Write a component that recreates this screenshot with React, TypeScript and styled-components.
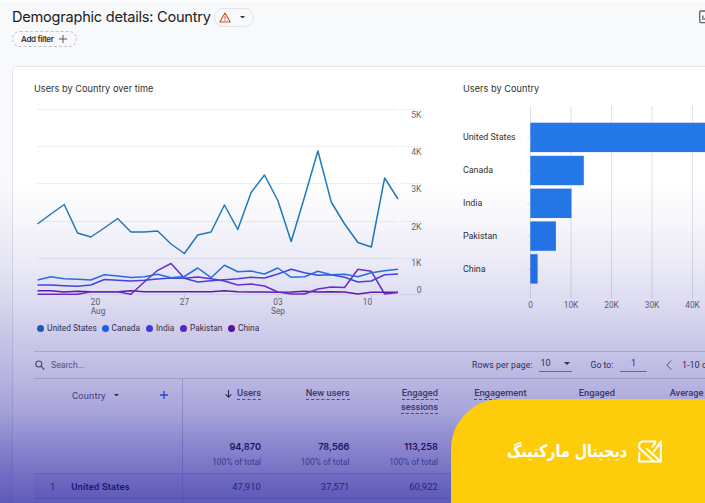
import React from "react";
import styled, { createGlobalStyle } from "styled-components";

const GlobalStyle = createGlobalStyle`
  * { box-sizing: border-box; }
  body { margin: 0; overflow: hidden; background: #f8f9fb; font-family: Roboto, sans-serif; color: #35363a; }
`;

const Page = styled.main`
  position: relative;
  width: 705px;
  height: 503px;
  overflow: hidden;
  background: #f8f9fb;
  border-top: 2px solid #fff;
`;

const Header = styled.header`
  display: flex;
  flex-direction: column;
  height: 64px;
  padding: 5px 0 0 12px;
`;

const TitleRow = styled.div`
  display: flex;
  align-items: center;
  height: 20px;
`;

const Title = styled.h1`
  width: 202px;
  margin: 0;
  font: 400 14.6px/20px Inter, sans-serif;
  letter-spacing: -0.25px;
  white-space: nowrap;
  color: #202124;
`;

const WarningPill = styled.div`
  display: flex;
  align-items: center;
  gap: 9px;
  width: 40px;
  height: 19px;
  padding-left: 4px;
  border: 1px solid #e1e3e7;
  border-radius: 10px;
`;

const HeaderSpacer = styled.div`
  flex: 1;
`;

const FilterButton = styled.button`
  display: flex;
  align-items: center;
  gap: 5px;
  width: 65px;
  height: 16px;
  margin-top: 4px;
  padding: 0 0 0 8px;
  border: 1px dashed #c2c4c8;
  border-radius: 8px;
  background: none;
  font: 600 8px Inter, sans-serif;
  letter-spacing: -0.32px;
  white-space: nowrap;
  color: #303134;
`;

const Card = styled.section`
  width: 710px;
  height: 460px;
  margin-left: 12px;
  padding-left: 21px;
  border: 1px solid #e3e4e8;
  border-radius: 5px;
  background: #fff;
`;

const Charts = styled.div`
  display: grid;
  grid-template-columns: 429px 1fr;
  height: 284px;
  padding-top: 14px;
`;

const ChartPanel = styled.div`
  display: flex;
  flex-direction: column;
`;

const ChartTitle = styled.h2`
  height: 14px;
  margin: 0;
  font: 400 9.2px/15px Inter, sans-serif;
  letter-spacing: 0.02px;
  color: #303134;
`;

const Plot = styled.svg`
  display: block;
  flex: none;
  overflow: visible;
  font-family: Roboto, sans-serif;
`;

const Legend = styled.div`
  display: grid;
  grid-template-columns: 64.5px 44.5px 34px 48px 50px;
  padding-left: 3px;
  margin-top: 2px;
`;

const LegendItem = styled.span<{ $color: string }>`
  display: flex;
  align-items: center;
  gap: 3px;
  font-size: 8.4px;
  line-height: 12px;
  white-space: nowrap;
  &::before {
    content: "";
    width: 7px;
    height: 7px;
    border-radius: 50%;
    background: ${(p) => p.$color};
  }
`;

const Table = styled.div`
  width: 686px;
  border-top: 1px solid #d3d4da;
`;

const Toolbar = styled.div`
  display: flex;
  align-items: center;
  height: 27px;
  border-bottom: 1px solid #d3d4da;
  font-size: 8.7px;
  white-space: nowrap;
`;

const SearchBox = styled.div`
  display: flex;
  flex: none;
  align-items: center;
  gap: 6px;
  width: 438px;
  color: #66676c;
`;

const RowsLabel = styled.span`
  flex: none;
  width: 66.5px;
  letter-spacing: 0.1px;
`;

const Field = styled.div<{ $width: number; $gap: number }>`
  display: flex;
  flex: none;
  justify-content: center;
  align-items: center;
  gap: 13px;
  width: ${(p) => p.$width}px;
  height: 13px;
  margin-right: ${(p) => p.$gap}px;
  padding-bottom: 3px;
  border-bottom: 1px solid #85868c;
  font-size: 9px;
`;

const GoLabel = styled.span`
  flex: none;
  width: 29.5px;
`;

const Range = styled.span`
  margin-left: 10px;
  font-size: 9px;
`;

const Row = styled.div<{ $height: number; $shaded?: boolean }>`
  display: grid;
  grid-template-columns: 149px 78px repeat(5, 88.5px);
  height: ${(p) => p.$height}px;
  border-bottom: 1px solid #d3d4da;
  background: ${(p) => (p.$shaded ? "#f3f3f6" : "transparent")};
`;

const DimensionHead = styled.div`
  display: flex;
  height: 32px;
  align-items: center;
  padding-left: 38px;
  font-size: 9.3px;
  color: #55565b;
  letter-spacing: 0.2px;
  & svg:first-of-type { margin-left: 8px; }
  & svg:last-of-type { margin-left: 41px; }
`;

const DimensionCell = styled.div`
  border-right: 1px solid #d0d1d8;
`;

const MetricCell = styled.div`
  display: flex;
  flex-direction: column;
  align-items: flex-end;
  padding-top: 8px;
`;

const MetricName = styled.div`
  display: flex;
  flex-direction: column;
  align-items: flex-end;
  height: 53px;
  font-size: 9.3px;
  font-weight: 500;
  line-height: 12px;
  white-space: nowrap;
  color: #4a4b50;
`;

const MetricLine = styled.span`
  display: flex;
  align-items: center;
  gap: 5px;
  height: 13.5px;
  & > span { border-bottom: 1px dashed #66676d; line-height: 12px; }
`;

const Total = styled.strong`
  font: 600 9.2px/14px Inter, sans-serif;
  letter-spacing: 0.02px;
  color: #101116;
`;

const Share = styled.small`
  margin-top: 1px;
  font-size: 8.4px;
  line-height: 14px;
  color: #66676c;
`;

const NameCell = styled.div`
  display: flex;
  align-items: center;
  gap: 16px;
  padding-left: 16px;
  border-right: 1px solid #d0d1d8;
  font-size: 9.3px;
  & strong { font-weight: 600; letter-spacing: 0.18px; color: #101116; }
`;

const ValueCell = styled.div`
  display: flex;
  align-items: center;
  justify-content: flex-end;
  font-size: 9.5px;
  letter-spacing: 0.05px;
`;

const Tint = styled.div`
  position: absolute;
  inset: -2px 0 0 0;
  pointer-events: none;
  background: linear-gradient(
    to bottom,
    rgba(32, 24, 160, 0) 180px,
    rgba(32, 24, 160, 0.03) 215px,
    rgba(32, 24, 160, 0.085) 260px,
    rgba(32, 24, 160, 0.15) 300px,
    rgba(32, 24, 160, 0.235) 340px,
    rgba(32, 24, 160, 0.31) 378px,
    rgba(32, 24, 160, 0.39) 410px,
    rgba(32, 24, 160, 0.52) 445px,
    rgba(32, 24, 160, 0.61) 472px,
    rgba(32, 24, 160, 0.71) 503px
  );
`;

const Brand = styled.aside`
  position: absolute;
  right: 0;
  bottom: 0;
  display: flex;
  align-items: center;
  justify-content: flex-end;
  gap: 11px;
  width: 254px;
  height: 104px;
  padding-right: 43px;
  border-top-left-radius: 50px;
  background: #fdcd0c;
  color: #fff;
`;

const BrandName = styled.span`
  font: 700 17px/24px "DejaVu Sans", sans-serif;
  white-space: nowrap;
  transform: scaleX(0.84);
  transform-origin: right center;
`;

const X0 = 37.5;
const STEP = 13.352;

const series = [
  { name: "China", color: "#6a1ba4", ys: [290.7, 290.7, 292, 291.3, 291.7, 291.7, 291.7, 290.7, 291.7, 291.7, 291.7, 291.7, 291.7, 291.7, 290.8, 291.7, 292, 292, 292.3, 292, 291.3, 292, 291.7, 292, 294, 292.3, 292.3, 292.3] },
  { name: "Pakistan", color: "#722fcf", ys: [294.3, 294.3, 294.3, 294.3, 291.7, 291.7, 291.7, 294.3, 282, 270.3, 263.5, 278.3, 277, 278.7, 281, 285, 284, 286, 292, 294, 294, 289, 287, 287.5, 269.3, 271.3, 294, 292.5] },
  { name: "India", color: "#4a48e8", ys: [285, 285, 285.7, 286.3, 285, 279.5, 280.3, 281, 280.3, 279, 278, 278.3, 282, 280.7, 279.7, 278.7, 277.3, 278, 274, 269.3, 272.7, 275.3, 274.7, 277.3, 282, 281, 274.7, 274] },
  { name: "Canada", color: "#2878ea", ys: [280, 276.7, 278.7, 279.3, 280, 274.7, 276, 277.5, 276.7, 274.3, 277.7, 276.5, 268, 277.7, 265.3, 271.7, 271, 274, 268, 277.3, 276.7, 271.3, 274.7, 274.3, 276.7, 272.7, 270.7, 269.3] },
  { name: "United States", color: "#1f7cba", ys: [224, 214, 204.5, 233, 237, 228, 218.5, 232, 232, 231, 244, 253.5, 235, 232, 205, 229.5, 192.5, 175, 200.5, 241.5, 197, 151, 202, 224, 242.5, 247, 178, 199] },
];

const yTicks = [
  { y: 109.5, label: "5K", ly: 118 },
  { y: 146.5, label: "4K", ly: 155 },
  { y: 183.5, label: "3K", ly: 192 },
  { y: 221.5, label: "2K", ly: 229.5 },
  { y: 258.5, label: "1K", ly: 266 },
  { y: 294.5, label: "0", ly: 292.5 },
];

const xTicks = [
  { x: 95.5, tick: 91, day: "20", month: "Aug", monthX: 98 },
  { x: 184.5, tick: 184.5, day: "27", month: "", monthX: 0 },
  { x: 278, tick: 278, day: "03", month: "Sep", monthX: 278 },
  { x: 367.5, tick: 371.5, day: "10", month: "", monthX: 0 },
];

const legend = [
  ["United States", "#1670b8"],
  ["Canada", "#1e6ff0"],
  ["India", "#4545ee"],
  ["Pakistan", "#6a28c8"],
  ["China", "#6410a4"],
];

const bars = [
  { name: "United States", y: 122.7, w: 180 },
  { name: "Canada", y: 155.8, w: 53.5 },
  { name: "India", y: 188.6, w: 41.2 },
  { name: "Pakistan", y: 221.4, w: 25.6 },
  { name: "China", y: 254.2, w: 7.3 },
];

const metrics = [
  { lines: ["Users"], sorted: true, total: "94,870", value: "47,910" },
  { lines: ["New users"], total: "78,566", value: "37,571" },
  { lines: ["Engaged", "sessions"], total: "113,258", value: "60,922" },
  { lines: ["Engagement"] },
  { lines: ["Engaged"] },
  { lines: ["Average"] },
];

const Caret = ({ size = 5 }: { size?: number }) => (
  <svg width={size} height={size / 2} viewBox="0 0 6 3">
    <path d="M0 0h6L3 3z" fill="#35363a" />
  </svg>
);

function LineChart() {
  return (
    <Plot width="429" height="225" viewBox="34 95 429 225">
      {yTicks.map((t) => (
        <g key={t.label}>
          <path d={`M37.5 ${t.y}H398M401 ${t.y}H421`} stroke="#eeeff1" />
          <text x="421.5" y={t.ly} fontSize="8.6" fill="#66676c" textAnchor="end">{t.label}</text>
        </g>
      ))}
      {xTicks.map((t) => (
        <g key={t.day} fontSize="8.3" fill="#66676c">
          <path d={`M${t.tick} 295v3`} stroke="#d9dadf" />
          <text x={t.x} y="305" textAnchor="middle">{t.day}</text>
          {t.month && <text x={t.monthX} y="313.5" textAnchor="middle">{t.month}</text>}
        </g>
      ))}
      {series.map((s) => (
        <polyline
          key={s.name}
          points={s.ys.map((y, i) => `${X0 + i * STEP},${y}`).join(" ")}
          fill="none"
          stroke={s.color}
          strokeWidth="1.5"
          strokeLinejoin="round"
        />
      ))}
    </Plot>
  );
}

function BarChart() {
  return (
    <Plot width="247" height="225" viewBox="463 95 247 225">
      {[0, 1, 2, 3, 4].map((i) => (
        <g key={i}>
          <path d={`M${530.5 + i * 40.5} 106V299`} stroke="#e2e3e6" />
          <text x={530.5 + i * 40.5} y="308" fontSize="8.3" fill="#66676c" textAnchor="middle">
            {i ? `${i}0K` : "0"}
          </text>
        </g>
      ))}
      {bars.map((b) => (
        <g key={b.name}>
          <path d={`M527 ${b.y + 15}h3`} stroke="#e2e3e6" />
          <rect x="530.3" y={b.y} width={b.w} height="29.4" fill="#2478e8" />
          <text x="463" y={b.y + 17.6} fontSize="8.85" fill="#303134">{b.name}</text>
        </g>
      ))}
    </Plot>
  );
}

export default function App() {
  return (
    <>
      <GlobalStyle />
      <Page>
        <Header>
          <TitleRow>
            <Title>Demographic details: Country</Title>
            <WarningPill>
              <svg width="12" height="11" viewBox="0 0 12 11" fill="none" stroke="#d2562b" strokeWidth="1.2">
                <path d="M6 1 11.2 10H.8z" strokeLinejoin="round" />
                <path d="M6 4.2v2.6M6 7.6v1.1" />
              </svg>
              <Caret />
            </WarningPill>
            <HeaderSpacer />
            <svg width="6" height="14" viewBox="0 0 6 14" fill="none" stroke="#5f6368" strokeWidth="1.3">
              <path d="M8 1H2Q.7 1 .7 2.3v9Q.7 12.6 2 12.6h6M3.9 5.5v4.5M6 8v2" />
            </svg>
          </TitleRow>
          <FilterButton>
            Add filter
            <svg width="8" height="8" viewBox="0 0 8 8" stroke="#55575b">
              <path d="M4 0v8M0 4h8" />
            </svg>
          </FilterButton>
        </Header>
        <Card>
          <Charts>
            <ChartPanel>
              <ChartTitle>Users by Country over time</ChartTitle>
              <LineChart />
              <Legend>
                {legend.map(([name, color]) => (
                  <LegendItem key={name} $color={color}>{name}</LegendItem>
                ))}
              </Legend>
            </ChartPanel>
            <ChartPanel>
              <ChartTitle>Users by Country</ChartTitle>
              <BarChart />
            </ChartPanel>
          </Charts>
          <Table>
            <Toolbar>
              <SearchBox>
                <svg width="11" height="10" viewBox="0 0 11 10" fill="none" stroke="#55565b" strokeWidth="1.1">
                  <circle cx="4.8" cy="4" r="3" />
                  <path d="m7 6.2 3.3 3.3" />
                </svg>
                Search...
              </SearchBox>
              <RowsLabel>Rows per page:</RowsLabel>
              <Field $width={33} $gap={19}>10<Caret size={6} /></Field>
              <GoLabel>Go to:</GoLabel>
              <Field $width={27} $gap={19}>1</Field>
              <svg width="6" height="10" viewBox="0 0 6 10" fill="none" stroke="#66676c">
                <path d="M5.2.5.8 5l4.4 4.5" />
              </svg>
              <Range>1-10 o</Range>
            </Toolbar>
            <Row $height={95}>
              <DimensionCell>
                <DimensionHead>
                  Country
                  <Caret />
                  <svg width="8" height="8" viewBox="0 0 8 8" stroke="#2368e8" strokeWidth="1.4">
                    <path d="M4 0v8M0 4h8" />
                  </svg>
                </DimensionHead>
              </DimensionCell>
              {metrics.map((m, i) => (
                <MetricCell key={i}>
                  <MetricName>
                    {m.lines.map((line) => (
                      <MetricLine key={line}>
                        {m.sorted && (
                          <svg width="7" height="8" viewBox="0 0 7 8" fill="none" stroke="#35363a" strokeWidth="1.1">
                            <path d="M3.5 0v7M.7 4.3l2.8 2.8 2.8-2.8" />
                          </svg>
                        )}
                        <span>{line}</span>
                      </MetricLine>
                    ))}
                  </MetricName>
                  {m.total && <Total>{m.total}</Total>}
                  {m.total && <Share>100% of total</Share>}
                </MetricCell>
              ))}
            </Row>
            <Row $height={25} $shaded>
              <NameCell>1<strong>United States</strong></NameCell>
              {metrics.map((m, i) => (
                <ValueCell key={i}>{m.value}</ValueCell>
              ))}
            </Row>
            <Row $height={25}><NameCell /></Row>
          </Table>
        </Card>
        <Tint />
        <Brand>
          <BrandName dir="rtl" lang="fa">دیجیتال مارکتینگ</BrandName>
          <svg width="24" height="23" viewBox="0 0 24 23" fill="none" stroke="#fff" strokeWidth="2">
            <path d="M18 1.5H4L1.2 3.8V8L16 21.5M1.2 12v9.5h21.6V2L15.5 12M18 1.5 14 7.5M8.5 8.5 22.5 21.5" />
          </svg>
        </Brand>
      </Page>
    </>
  );
}
